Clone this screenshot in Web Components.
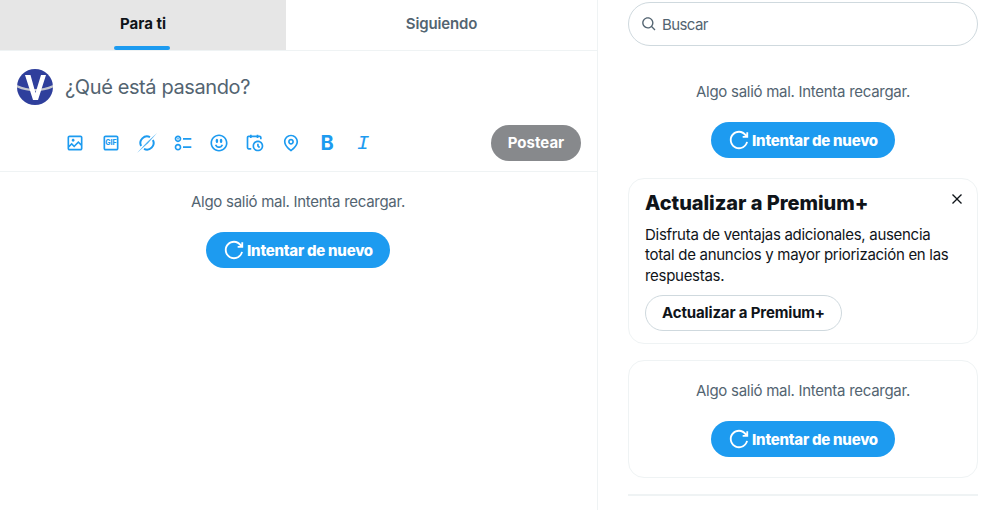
<!DOCTYPE html>
<html lang="es">
<head>
<meta charset="utf-8">
<title>Inicio</title>
<style>
html,body{margin:0;padding:0;background:#fff;height:100%;overflow:hidden}
body{font-family:Inter,"Noto Sans",sans-serif;color:#0f1419}
</style>
</head>
<body>
<x-app>
    <x-main slot="main">
        <x-tabs></x-tabs>
        <x-composer></x-composer>
        <x-error class="feed"></x-error>
    </x-main>
    <x-side slot="side">
        <x-search></x-search>
        <x-error class="trend"></x-error>
        <x-premium></x-premium>
        <x-card><x-error class="incard"></x-error></x-card>
        <x-rule></x-rule>
    </x-side>
</x-app>

<script>
//icons
const icons = {
    media: 'M3 5.5C3 4.119 4.119 3 5.5 3h13C19.881 3 21 4.119 21 5.5v13c0 1.381-1.119 2.5-2.5 2.5h-13C4.119 21 3 19.881 3 18.5v-13zM5.5 5c-.276 0-.5.224-.5.5v9.086l3-3 3 3 5-5 3 3V5.5c0-.276-.224-.5-.5-.5h-13zM19 15.414l-3-3-5 5-3-3-3 3V18.5c0 .276.224.5.5.5h13c.276 0 .5-.224.5-.5v-3.086zM9.75 7C8.784 7 8 7.784 8 8.75s.784 1.75 1.75 1.75 1.75-.784 1.75-1.75S10.716 7 9.75 7z',
    frame: 'M3 5.5C3 4.119 4.12 3 5.5 3h13C19.88 3 21 4.119 21 5.5v13c0 1.381-1.12 2.5-2.5 2.5h-13C4.12 21 3 19.881 3 18.5v-13zM5.5 5c-.28 0-.5.224-.5.5v13c0 .276.22.5.5.5h13c.28 0 .5-.224.5-.5v-13c0-.276-.22-.5-.5-.5h-13z',
    poll: 'M6 5c-1.1 0-2 .895-2 2s.9 2 2 2 2-.895 2-2-.9-2-2-2zM2 7c0-2.209 1.79-4 4-4s4 1.791 4 4-1.79 4-4 4-4-1.791-4-4zm20 1H12V6h10v2zM6 15c-1.1 0-2 .895-2 2s.9 2 2 2 2-.895 2-2-.9-2-2-2zm-4 2c0-2.209 1.79-4 4-4s4 1.791 4 4-1.79 4-4 4-4-1.791-4-4zm20 1H12v-2h10v2zM7 7c0 .552-.45 1-1 1s-1-.448-1-1 .45-1 1-1 1 .448 1 1z',
    emoji: 'M8 9.5C8 8.119 8.672 7 9.5 7S11 8.119 11 9.5 10.328 12 9.5 12 8 10.881 8 9.5zm6.5 2.5c.828 0 1.5-1.119 1.5-2.5S15.328 7 14.5 7 13 8.119 13 9.5s.672 2.5 1.5 2.5zM12 16c-2.224 0-3.021-2.227-3.051-2.316l-1.897.633c.05.15 1.271 3.684 4.949 3.684s4.898-3.533 4.949-3.684l-1.896-.638c-.033.095-.83 2.322-3.053 2.322zm10.25-4.001c0 5.652-4.598 10.25-10.25 10.25S1.75 17.652 1.75 12 6.348 1.75 12 1.75 22.25 6.348 22.25 12zm-2 0c0-4.549-3.701-8.25-8.25-8.25S3.75 7.451 3.75 12s3.701 8.25 8.25 8.25 8.25-3.701 8.25-8.25z',
    schedule: 'M6 3V2h2v1h6V2h2v1h1.5C18.88 3 20 4.119 20 5.5v2h-2v-2c0-.276-.22-.5-.5-.5H16v1h-2V5H8v1H6V5H4.5c-.28 0-.5.224-.5.5v12c0 .276.22.5.5.5h3v2h-3C3.12 20 2 18.881 2 17.5v-12C2 4.119 3.12 3 4.5 3H6zm9.5 8c-2.49 0-4.5 2.015-4.5 4.5s2.01 4.5 4.5 4.5 4.5-2.015 4.5-4.5-2.01-4.5-4.5-4.5zM9 15.5C9 11.91 11.91 9 15.5 9s6.5 2.91 6.5 6.5-2.91 6.5-6.5 6.5S9 19.09 9 15.5zm5.5-2.5h2v2.086l1.71 1.707-1.42 1.414-2.29-2.293V13z',
    location: 'M12 7c-1.93 0-3.5 1.57-3.5 3.5S10.07 14 12 14s3.5-1.57 3.5-3.5S13.93 7 12 7zm0 5c-.827 0-1.5-.673-1.5-1.5S11.173 9 12 9s1.5.673 1.5 1.5S12.827 12 12 12zm0-10c-4.687 0-8.5 3.813-8.5 8.5 0 5.967 7.621 11.116 7.945 11.332l.555.37.555-.37c.324-.216 7.945-5.365 7.945-11.332C20.5 5.813 16.687 2 12 2zm0 17.77c-1.665-1.241-6.5-5.196-6.5-9.27C5.5 6.916 8.416 4 12 4s6.5 2.916 6.5 6.5c0 4.073-4.835 8.028-6.5 9.27z',
    search: 'M10.25 3.75c-3.59 0-6.5 2.91-6.5 6.5s2.91 6.5 6.5 6.5c1.795 0 3.419-.726 4.596-1.904 1.178-1.177 1.904-2.801 1.904-4.596 0-3.59-2.91-6.5-6.5-6.5zm-8.5 6.5c0-4.694 3.806-8.5 8.5-8.5s8.5 3.806 8.5 8.5c0 1.986-.682 3.815-1.824 5.262l4.781 4.781-1.414 1.414-4.781-4.781c-1.447 1.142-3.276 1.824-5.262 1.824-4.694 0-8.5-3.806-8.5-8.5z',
    close: 'M10.59 12L4.54 5.96l1.42-1.42L12 10.59l6.04-6.05 1.42 1.42L13.41 12l6.05 6.04-1.42 1.42L12 13.41l-6.04 6.05-1.42-1.42L10.59 12z',
    refresh: 'M12 4c-4.418 0-8 3.58-8 8s3.582 8 8 8c3.806 0 6.993-2.66 7.802-6.22l1.95.44C20.742 18.67 16.76 22 12 22 6.477 22 2 17.52 2 12S6.477 2 12 2c3.272 0 6.176 1.57 8 4V3.5h2v6h-6v-2h2.616C17.175 5.39 14.749 4 12 4z'
}
const svg = (d, size) => `<svg width="${size}" height="${size}" viewBox="0 0 24 24" fill="currentColor" aria-hidden="true"><path d="${d}"/></svg>`

class App extends HTMLElement {
    constructor() {
        super()
        this.attachShadow({ mode: 'open' }).innerHTML = `
        <style>
            :host{display:flex;width:994px;height:510px;overflow:hidden}
            .main{display:block;width:597px;height:510px;border-right:1px solid #eff3f4;flex:none}
            .side{display:block;width:350px;margin-left:30px;flex:none}
        </style>
        <div class="main"><slot name="main"></slot></div>
        <div class="side"><slot name="side"></slot></div>
        `
    }
}

class Main extends HTMLElement {
    constructor() {
        super()
        this.attachShadow({ mode: 'open' }).innerHTML = `<style>:host{display:block}</style><slot></slot>`
    }
}

class Side extends HTMLElement {
    constructor() {
        super()
        this.attachShadow({ mode: 'open' }).innerHTML = `<style>:host{display:flex;flex-direction:column}</style><slot></slot>`
    }
}

class Tabs extends HTMLElement {
    constructor() {
        super()
        this.attachShadow({ mode: 'open' }).innerHTML = `
        <style>
            :host{display:grid;grid-template-columns:286px 311px;height:50px;border-bottom:1px solid #eff3f4;font-size:15px}
            .tab{display:flex;align-items:center;justify-content:center;position:relative;font-weight:600;color:#536471;padding-bottom:3px;box-sizing:border-box;height:50px;letter-spacing:-.15px}
            .on{background:#e6e6e6;color:#0f1419;font-weight:700;letter-spacing:0}
            .on::after{content:'';position:absolute;left:114px;bottom:0;width:56px;height:4px;border-radius:2px;background:#1d9bf0}
        </style>
        <div class="tab on">Para ti</div>
        <div class="tab">Siguiendo</div>
        `
    }
}

class Composer extends HTMLElement {
    constructor() {
        super()
        const bar = [icons.media, 'gif', 'grok', icons.poll, icons.emoji, icons.schedule, icons.location, 'bold', 'italic'].map(i => {
            if (i == 'gif') return `<span class="ico">${svg(icons.frame, 20)}<b class="gif">GIF</b></span>`
            if (i == 'grok') return `<span class="ico"><svg width="20" height="20" viewBox="0 0 24 24" fill="none" stroke="currentColor" stroke-width="2.4"><path d="M15.600 4.900A8 8 0 0 0 4.900 15.600M19.100 8.400A8 8 0 0 1 8.400 19.100"/><path d="M0 24 12.200 10.800 24 0 13.200 12.200z" stroke="none" fill="currentColor" opacity=".8"/></svg></span>`
            if (i == 'bold') return `<span class="ico letter b">B</span>`
            if (i == 'italic') return `<span class="ico letter i">I</span>`
            return `<span class="ico">${svg(i, 20)}</span>`
        }).join('')
        this.attachShadow({ mode: 'open' }).innerHTML = `
        <style>
            :host{display:block;height:120px;border-bottom:1px solid #eff3f4;box-sizing:content-box;padding:0}
            .top{display:flex;align-items:center;gap:12px;padding:18px 0 0 17px;height:36px}
            .q{font-size:20px;color:#536471;line-height:36px;letter-spacing:-.39px}
            .tools{display:flex;align-items:center;justify-content:space-between;padding:20px 16px 0 57px}
            .icons{display:flex;color:#1d9bf0}
            .ico{width:36px;height:36px;display:flex;align-items:center;justify-content:center;position:relative}
            .gif{position:absolute;left:0;right:0;top:0;text-align:center;font:800 7px/36px Inter,sans-serif}
            .letter{font-size:20px}
            .b{font-weight:700;font-family:Inter,sans-serif}
            .i{font:italic 400 21px "Liberation Mono",monospace}
            button{all:unset;height:36px;width:90px;border-radius:18px;background:#87898c;color:#fff;font-weight:700;font-size:15px;text-align:center;line-height:36px}
        </style>
        <div class="top">
            <svg width="36" height="36" viewBox="0 0 36 36">
                <circle cx="18" cy="18" r="18" fill="#2f3f9c"/>
                <path d="M0 16Q18 24 36 16v2.500Q18 26 0 18.500z" fill="#c3c6cf"/>
                <path d="M8 6h5.500L18.500 24 24 6h5L21 31h-5z" fill="#fff"/>
            </svg>
            <span class="q">¿Qué está pasando?</span>
        </div>
        <div class="tools">
            <div class="icons">${bar}</div>
            <button>Postear</button>
        </div>
        `
    }
}

class RetryButton extends HTMLElement {
    constructor() {
        super()
        this.attachShadow({ mode: 'open' }).innerHTML = `
        <style>
            :host{display:flex;align-items:center;justify-content:center;gap:2px;width:184px;height:36px;border-radius:18px;background:#1d9bf0;color:#fff;font-size:15px;font-weight:800;letter-spacing:-.25px}
        </style>
        ${svg(icons.refresh, 22)}<span>Intentar de nuevo</span>
        `
    }
}

class ErrorBox extends HTMLElement {
    constructor() {
        super()
        this.attachShadow({ mode: 'open' }).innerHTML = `
        <style>
            :host{display:flex;flex-direction:column;align-items:center;padding-top:20px;gap:20px}
            :host(.feed){padding-right:1px}
            :host(.trend){padding-top:36px}
            :host(.incard){padding-top:20px;padding-bottom:20px}
            p{margin:0;font-size:15px;line-height:20px;color:#536471;letter-spacing:-.28px}
        </style>
        <p>Algo salió mal. Intenta recargar.</p>
        <x-retry></x-retry>
        `
    }
}

class Search extends HTMLElement {
    constructor() {
        super()
        this.attachShadow({ mode: 'open' }).innerHTML = `
        <style>
            :host{display:flex;align-items:center;box-sizing:border-box;height:44px;margin-top:2px;border:1px solid #cfd9de;border-radius:22px;padding-left:12px;gap:5px;color:#536471;font-size:15px;letter-spacing:-.6px}
        </style>
        ${svg(icons.search, 16)}<span>Buscar</span>
        `
    }
}

class Card extends HTMLElement {
    constructor() {
        super()
        this.attachShadow({ mode: 'open' }).innerHTML = `
        <style>
            :host{display:block;box-sizing:border-box;border:1px solid #eff3f4;border-radius:16px;margin-top:16px}
        </style>
        <slot></slot>
        `
    }
}

class Premium extends HTMLElement {
    constructor() {
        super()
        this.attachShadow({ mode: 'open' }).innerHTML = `
        <style>
            :host{display:block;position:relative;box-sizing:border-box;height:166px;margin-top:20px;border:1px solid #eff3f4;border-radius:16px;padding:12px 16px}
            h2{margin:0;font-size:20px;line-height:24px;font-weight:800;letter-spacing:-.05px}
            p{margin:10px 0 0;font-size:15px;line-height:20.3px;width:306px;letter-spacing:-.29px}
            .cta{display:inline-flex;align-items:center;justify-content:center;box-sizing:border-box;width:197px;height:36px;margin-top:9px;border:1px solid #cfd9de;border-radius:18px;font-size:15px;font-weight:700;letter-spacing:-.15px}
            .x{position:absolute;top:12px;right:12px;width:16px;height:16px;display:block;color:#0f1419}
        </style>
        <h2>Actualizar a Premium+</h2>
        <p>Disfruta de ventajas adicionales, ausencia total de anuncios y mayor priorización en las respuestas.</p>
        <div class="cta">Actualizar a Premium+</div>
        <span class="x">${svg(icons.close, 16)}</span>
        `
    }
}

class Rule extends HTMLElement {
    constructor() {
        super()
        this.attachShadow({ mode: 'open' }).innerHTML = `<style>:host{display:block;height:2px;margin-top:16px;background:#eff3f4}</style>`
    }
}

window.customElements.define('x-app', App)
window.customElements.define('x-main', Main)
window.customElements.define('x-side', Side)
window.customElements.define('x-tabs', Tabs)
window.customElements.define('x-composer', Composer)
window.customElements.define('x-retry', RetryButton)
window.customElements.define('x-error', ErrorBox)
window.customElements.define('x-search', Search)
window.customElements.define('x-card', Card)
window.customElements.define('x-premium', Premium)
window.customElements.define('x-rule', Rule)
</script>
</body>
</html>
